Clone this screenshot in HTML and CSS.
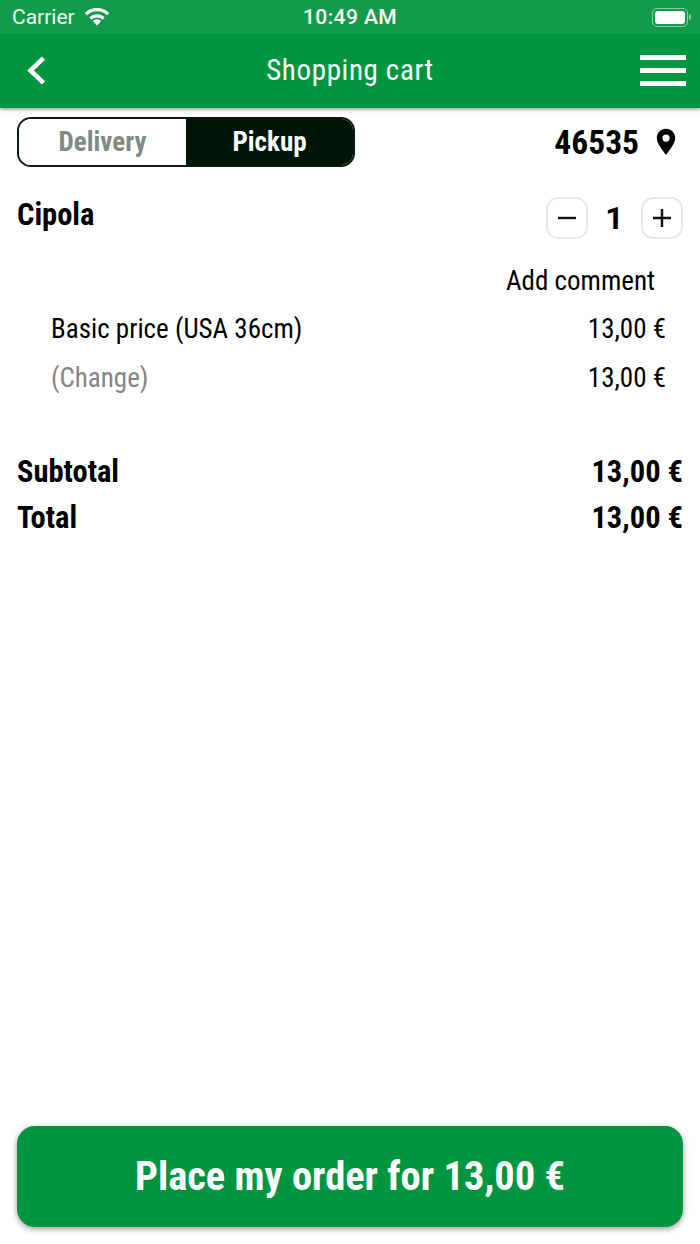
FILE: index.html
```html
<!DOCTYPE html>
<html lang="en">
<head>
<meta charset="utf-8">
<title>Shopping cart</title>
<link rel="stylesheet" href="styles.css">
</head>
<body>
<div class="app">
  <header class="header">
    <div class="status">
      <div class="status-left">
        <span class="carrier">Carrier</span>
        <svg class="wifi" width="26" height="19" viewBox="0 0 26 19"><path d="M13 18.500 8.800 14a5.800 5.800 0 0 1 8.400 0Z" fill="#fff"/><path d="M5.400 10.500a10.800 10.800 0 0 1 15.200 0l-2.100 2.200a7.800 7.800 0 0 0-11 0Z" fill="#fff"/><path d="M.8 6a17.300 17.300 0 0 1 24.400 0l-2.200 2.300a14.200 14.200 0 0 0-20 0Z" fill="#fff"/></svg>
      </div>
      <span class="clock">10:49 AM</span>
      <div class="battery"><span class="battery-body"><span class="battery-fill"></span></span><span class="battery-cap"></span></div>
    </div>
    <div class="nav">
      <svg class="back" width="24" height="33" viewBox="0 0 24 33"><path d="M18.500 4.200 5.500 16.500l13 12.300" fill="none" stroke="#fff" stroke-width="4.600"/></svg>
      <span class="nav-title"><span class="cond">Shopping cart</span></span>
      <div class="burger"><span></span><span></span><span></span></div>
    </div>
  </header>
  <main class="content">
    <div class="mode-row">
      <div class="toggle">
        <span class="toggle-opt off"><span class="cond">Delivery</span></span>
        <span class="toggle-opt on"><span class="cond">Pickup</span></span>
      </div>
      <div class="zip">
        <span class="cond">46535</span>
        <svg width="20" height="28" viewBox="0 0 20 28"><path fill-rule="evenodd" d="M10 .8C4.700.8.800 4.800.800 10c0 6 6.200 12.500 9.200 17 3-4.500 9.200-11 9.200-17C19.200 4.800 15.300.8 10 .8Zm0 5.700a3.600 3.600 0 1 1 0 7.200 3.600 3.600 0 0 1 0-7.200Z" fill="#000"/></svg>
      </div>
    </div>
    <div class="item-row">
      <span class="item-name"><span class="cond">Cipola</span></span>
      <div class="qty">
        <span class="qty-btn"><svg width="20" height="20" viewBox="0 0 20 20"><path d="M1 10h18" stroke="#111" stroke-width="2.400"/></svg></span>
        <span class="qty-num">1</span>
        <span class="qty-btn"><svg width="20" height="20" viewBox="0 0 20 20"><path d="M1 10h18M10 1v18" stroke="#111" stroke-width="2.400"/></svg></span>
      </div>
    </div>
    <div class="comment"><span class="cond">Add comment</span></div>
    <div class="line"><span class="cond">Basic price (USA 36cm)</span><span class="cond end">13,00 €</span></div>
    <div class="line second"><span class="cond muted">(Change)</span><span class="cond end">13,00 €</span></div>
    <div class="sum first"><span class="cond">Subtotal</span><span class="cond end">13,00 €</span></div>
    <div class="sum"><span class="cond">Total</span><span class="cond end">13,00 €</span></div>
  </main>
  <footer class="footer">
    <div class="order"><span class="cond">Place my order for 13,00 €</span></div>
  </footer>
</div>
</body>
</html>
```
FILE: styles.css
```css
* { box-sizing: border-box; }
html, body { margin: 0; padding: 0; }
body { font-family: "Roboto", "Liberation Sans", sans-serif; color: #000; background: #fff; }
.app { width: 700px; height: 1244px; display: flex; flex-direction: column; overflow: hidden; }
.cond { font-stretch: 75%; display: inline-block; white-space: nowrap; }

.header { height: 108px; background: #00963f; box-shadow: 0 1px 4px rgba(0,0,0,.5); color: #fff; flex: none; position: relative; }
.status { height: 34px; background: #119b4a; display: flex; justify-content: space-between; align-items: center; padding: 0 9px 0 12px; }
.status-left { display: flex; align-items: center; gap: 9px; width: 137px; }
.carrier { font-size: 21px; color: #f2f9f5; }
.wifi { margin-top: -2px; }
.clock { font-size: 21px; font-weight: 500; letter-spacing: .4px; }
.battery { width: 140px; display: flex; justify-content: flex-end; align-items: center; }
.battery-body { width: 36px; height: 19px; border: 1.500px solid rgba(255,255,255,.5); border-radius: 5px; padding: 2px; display: flex; }
.battery-fill { flex: 1; background: #fff; border-radius: 3px; }
.battery-cap { width: 2px; height: 6px; background: rgba(255,255,255,.5); margin-left: 1px; border-radius: 0 2px 2px 0; }

.nav { height: 74px; display: flex; align-items: center; justify-content: space-between; padding: 0 14px 1px 25px; }
.nav-title { font-size: 29px; letter-spacing: .65px; position: absolute; left: 0; right: 0; text-align: center; top: 51px; line-height: 38px; }
.burger { width: 46px; display: flex; flex-direction: column; gap: 8px; }
.burger span { display: block; height: 5px; background: #fff; }

.content { flex: 1; padding: 9px 17px 0; }
.mode-row { display: flex; justify-content: space-between; align-items: center; }
.toggle { width: 338px; height: 50px; border: 2px solid #0a1a0e; border-radius: 14px; display: flex; overflow: hidden; }
.toggle-opt { flex: 1; display: flex; align-items: center; justify-content: center; font-size: 27px; font-weight: 700; }
.off { color: #7f8a85; background: #fff; }
.on { color: #fff; background: #001509; }
.zip { display: flex; align-items: center; gap: 17px; font-size: 33.500px; font-weight: 700; padding-right: 7px; }
.item-row { display: flex; justify-content: space-between; margin-top: 30px; }
.item-name { font-size: 30.500px; font-weight: 700; line-height: 45px; margin-top: -5px; }
.qty { display: flex; align-items: center; }
.qty-btn { width: 42px; height: 42px; border: 2px solid #e8e8e8; border-radius: 12px; display: flex; align-items: center; justify-content: center; }
.qty-num { width: 53px; text-align: center; font-size: 32px; font-weight: 700; }
.comment { font-size: 27px; text-align: right; padding-right: 28px; margin-top: 22px; line-height: 40px; }
.line { display: flex; justify-content: space-between; font-size: 27px; line-height: 40px; margin: 8px 17px 0 34px; }
.second { margin-top: 9px; }
.muted { color: #858585; }
.sum { display: flex; justify-content: space-between; font-size: 30.500px; font-weight: 700; line-height: 40px; margin-top: 6px; }
.sum.first { margin-top: 54px; }
.footer { flex: none; padding: 0 17px 17px; }
.order { height: 101px; padding-bottom: 2px; background: #00963f; color: #fff; border-radius: 18px; box-shadow: 0 2px 6px rgba(0,0,0,.4); display: flex; align-items: center; justify-content: center; font-size: 40.500px; font-weight: 700; }
```
